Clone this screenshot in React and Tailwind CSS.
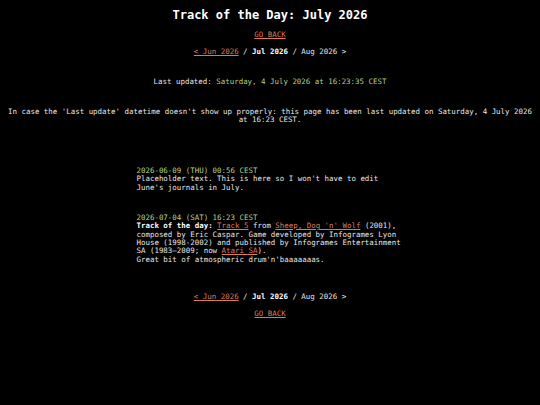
const linkCls = 'text-[#dc7a55] underline'
const greenCls = 'text-[#b3cf8a]'

function MonthNav() {
  return (
    <p className="text-center">
      <a href="#" className={linkCls}>&lt; Jun 2026</a>
      {' / '}
      <span className="font-bold text-white">Jul 2026</span>
      {' / Aug 2026 >'}
    </p>
  )
}

function GoBack() {
  return (
    <p className="text-center">
      <a href="#" className={linkCls}>GO BACK</a>
    </p>
  )
}

export default function App() {
  return (
    <div
      className="min-h-[405px] w-[540px] bg-black text-[#e6e6e6] text-[7.45px] leading-[8.45px] overflow-hidden"
      style={{ fontFamily: '"DejaVu Sans Mono", "Liberation Mono", monospace' }}
    >
      <h1 className="pt-[8px] text-center text-[12px] leading-[15px] font-bold text-white">Track of the Day: July 2026</h1>

      <div className="mt-[8px]"><GoBack /></div>
      <div className="mt-[8.6px]"><MonthNav /></div>

      <p className="mt-[21.6px] text-center">
        Last updated: <span className={greenCls}>Saturday, 4 July 2026 at 16:23:35 CEST</span>
      </p>

      <p className="mt-[21px] px-[8px] text-center">
        In case the 'Last update' datetime doesn't show up properly: this page has been last updated on Saturday, 4 July 2026 at 16:23 CEST.
      </p>

      <div className="mx-auto mt-[42.4px] w-[267px]">
        <div>
          <p className={greenCls}>2026-06-09 (THU) 00:56 CEST</p>
          <p>Placeholder text. This is here so I won't have to edit June's journals in July.</p>
        </div>

        <div className="mt-[21.4px]">
          <p className={greenCls}>2026-07-04 (SAT) 16:23 CEST</p>
          <p>
            <span className="font-bold text-white">Track of the day:</span>{' '}
            <a href="#" className={linkCls}>Track 5</a> from{' '}
            <a href="#" className={linkCls}>Sheep, Dog 'n' Wolf</a> (2001), composed by Eric Caspar. Game developed by Infogrames Lyon House (1998-2002) and published by Infogrames Entertainment SA (1983–2009; now{' '}
            <a href="#" className={linkCls}>Atari SA</a>).
            <br />
            Great bit of atmospheric drum'n'baaaaaaas.
          </p>
        </div>
      </div>

      <div className="mt-[28.4px]"><MonthNav /></div>
      <div className="mt-[8.4px]"><GoBack /></div>
    </div>
  )
}
